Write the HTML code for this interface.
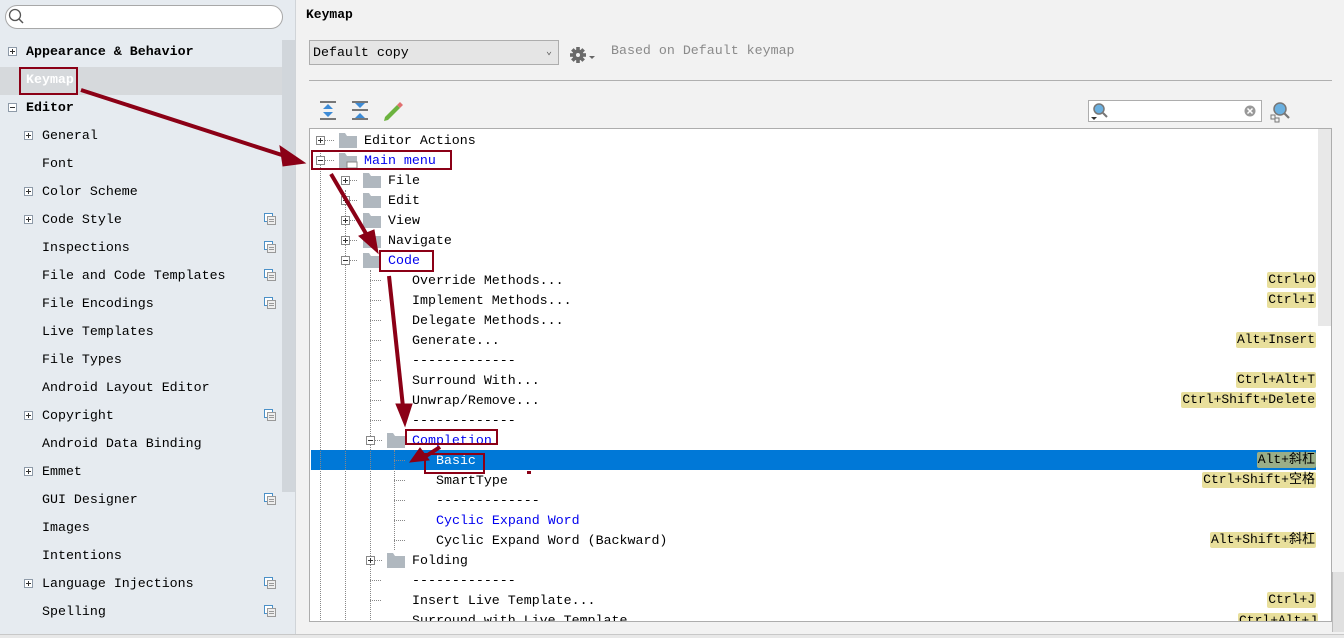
<!DOCTYPE html>
<html style="overflow:hidden"><head><meta charset="utf-8"><style>
*{margin:0;padding:0;box-sizing:border-box}
html,body{width:1344px;height:638px;overflow:hidden}
body{background:#f2f2f2;font-family:"Liberation Mono","Noto Sans CJK SC",monospace;font-size:13.3px;color:#000;position:relative}
.a{position:absolute;white-space:nowrap}
#side{position:absolute;left:0;top:0;width:296px;height:634px;background:#e6ebf0;border-right:1px solid #d0d4d8;overflow:hidden}
.si{position:absolute;height:28px;line-height:28px;white-space:nowrap}
.exp{position:absolute;width:9px;height:9px;border:1px solid #8e9aa8;background:#fff}
.exp::before{content:"";position:absolute;left:1px;top:3px;width:5px;height:1px;background:#333}
.exp.p::after{content:"";position:absolute;left:3px;top:1px;width:1px;height:5px;background:#333}
.r{position:absolute;height:20px;line-height:20px;white-space:nowrap}
.b{color:#0000ee}
.k{position:absolute;right:28px;height:16px;line-height:16px;background:#e8df9c;border-radius:2px;padding:0 1px;font-size:13px}
.dv{position:absolute;border-left:1px dotted #888;width:0}
.bx{position:absolute;border:2px solid #8b0016}
</style></head><body>
<div id="side">
 <div class="a" style="left:5px;top:5px;width:278px;height:24px;border:1px solid #a8a8a8;border-radius:12px;background:#fff"></div>
 <svg class="a" style="left:7px;top:8px" width="18" height="18"><circle cx="8" cy="7" r="5.5" fill="none" stroke="#555" stroke-width="1.3"/><line x1="12" y1="11" x2="16" y2="15" stroke="#555" stroke-width="1.5"/></svg>
 <div class="a" style="left:282px;top:40px;width:14px;height:452px;background:#d1d6db"></div>
 <div class="a" style="left:0;top:67px;width:282px;height:28px;background:#d6d9dc"></div>
 <div class="exp p" style="left:8px;top:47px"></div><div class="si" style="left:26px;top:38px;font-weight:bold">Appearance &amp; Behavior</div>
 <div class="si" style="left:26px;top:66px;font-weight:bold;color:#fff">Keymap</div>
 <div class="exp" style="left:8px;top:103px"></div><div class="si" style="left:26px;top:94px;font-weight:bold">Editor</div>
 <div class="exp p" style="left:24px;top:131px"></div><div class="si" style="left:42px;top:122px">General</div>
 <div class="si" style="left:42px;top:150px">Font</div>
 <div class="exp p" style="left:24px;top:187px"></div><div class="si" style="left:42px;top:178px">Color Scheme</div>
 <div class="exp p" style="left:24px;top:215px"></div><div class="si" style="left:42px;top:206px">Code Style</div>
 <div class="si" style="left:42px;top:234px">Inspections</div>
 <div class="si" style="left:42px;top:262px">File and Code Templates</div>
 <div class="si" style="left:42px;top:290px">File Encodings</div>
 <div class="si" style="left:42px;top:318px">Live Templates</div>
 <div class="si" style="left:42px;top:346px">File Types</div>
 <div class="si" style="left:42px;top:374px">Android Layout Editor</div>
 <div class="exp p" style="left:24px;top:411px"></div><div class="si" style="left:42px;top:402px">Copyright</div>
 <div class="si" style="left:42px;top:430px">Android Data Binding</div>
 <div class="exp p" style="left:24px;top:467px"></div><div class="si" style="left:42px;top:458px">Emmet</div>
 <div class="si" style="left:42px;top:486px">GUI Designer</div>
 <div class="si" style="left:42px;top:514px">Images</div>
 <div class="si" style="left:42px;top:542px">Intentions</div>
 <div class="exp p" style="left:24px;top:579px"></div><div class="si" style="left:42px;top:570px">Language Injections</div>
 <div class="si" style="left:42px;top:598px">Spelling</div>
</div>
<svg class="a" style="left:0;top:0" width="300" height="634">
 <defs><g id="cpy"><rect x="0.5" y="0.5" width="8" height="8" fill="#fff" stroke="#4a90c8"/><rect x="3.5" y="3.5" width="8" height="8" fill="#eee" stroke="#999"/><line x1="5" y1="6.5" x2="10" y2="6.5" stroke="#999"/><line x1="5" y1="8.5" x2="10" y2="8.5" stroke="#999"/></g></defs>
 <use href="#cpy" x="264" y="213"/><use href="#cpy" x="264" y="241"/><use href="#cpy" x="264" y="269"/><use href="#cpy" x="264" y="297"/><use href="#cpy" x="264" y="409"/><use href="#cpy" x="264" y="493"/><use href="#cpy" x="264" y="577"/><use href="#cpy" x="264" y="605"/>
</svg>
<div class="a" style="left:0;top:634px;width:1344px;height:4px;background:#e8e8e8;border-top:1px solid #c8c8c8"></div>

<div class="a" style="left:306px;top:7px;font-weight:bold;font-size:13px">Keymap</div>
<div class="a" style="left:309px;top:40px;width:250px;height:25px;border:1px solid #adadad;background:#e5e5e5;line-height:23px;padding-left:3px">Default copy<span style="position:absolute;right:6px;top:0;font-size:10px;color:#555">⌄</span></div>
<svg class="a" style="left:569px;top:45px" width="28" height="20"><g transform="translate(9,10)" fill="#6a6a6a"><circle r="5.5"/><g id="t"><rect x="-1.8" y="-8" width="3.6" height="16"/></g><use href="#t" transform="rotate(45)"/><use href="#t" transform="rotate(90)"/><use href="#t" transform="rotate(135)"/><circle r="2" fill="#f2f2f2"/></g><path d="M20 11 L26 11 L23 14Z" fill="#666"/></svg>
<div class="a" style="left:611px;top:43px;color:#8a8a8a">Based on Default keymap</div>
<div class="a" style="left:309px;top:80px;width:1023px;height:1px;background:#b0b0b0"></div>

<svg class="a" style="left:315px;top:98px" width="90" height="26">
 <line x1="5" y1="4" x2="21" y2="4" stroke="#777" stroke-width="2"/><line x1="5" y1="21" x2="21" y2="21" stroke="#777" stroke-width="2"/>
 <path d="M8 11 L13 6 L18 11Z M8 14 L13 19 L18 14Z" fill="#3d8bd6"/>
 <line x1="37" y1="4" x2="53" y2="4" stroke="#777" stroke-width="2"/><line x1="37" y1="12" x2="53" y2="12" stroke="#777" stroke-width="2"/><line x1="37" y1="21" x2="53" y2="21" stroke="#777" stroke-width="2"/>
 <path d="M40 5 L45 10 L50 5Z M40 20 L45 15 L50 20Z" fill="#3d8bd6"/>
 <path d="M70 19 L82 7 L85 10 L73 22 L69 23Z" fill="#6cb33f"/><path d="M82 7 L85 4 L88 7 L85 10Z" fill="#e07070"/>
</svg>

<div class="a" style="left:1088px;top:100px;width:174px;height:22px;border:1px solid #adadad;background:#fff"></div>
<svg class="a" style="left:1090px;top:101px" width="200" height="22"><circle cx="9" cy="8" r="5" fill="#6ab0e0" stroke="#777" stroke-width="1.5"/><line x1="13" y1="12" x2="17" y2="16" stroke="#777" stroke-width="2"/><path d="M1 16 L7 16 L4 19Z" fill="#333"/>
<circle cx="160" cy="10" r="5.5" fill="#999"/><path d="M157.5 7.5 L162.5 12.5 M162.5 7.5 L157.5 12.5" stroke="#fff" stroke-width="1.5"/>
<circle cx="190" cy="8" r="6" fill="#6ab0e0" stroke="#777" stroke-width="1.5"/><line x1="194" y1="12" x2="199" y2="17" stroke="#777" stroke-width="2.2"/><rect x="181" y="14" width="4" height="4" fill="none" stroke="#777"/><rect x="185" y="17" width="4" height="4" fill="none" stroke="#777"/></svg>

<div class="a" style="left:309px;top:128px;width:1023px;height:494px;background:#fff;border:1px solid #adadad;overflow:hidden">
 <div class="a" style="left:1008px;top:0;width:13px;height:197px;background:#e8e8e8"></div>
</div>
<div class="a" style="left:1332px;top:572px;width:12px;height:60px;background:#e0e0e0;border-left:1px solid #bbb"></div>
<div class="a" style="left:310px;top:129px;width:1021px;height:492px;overflow:hidden">
 <div class="a" style="left:1px;top:321px;width:1005px;height:20px;background:#0078d7"></div>
 <div class="dv" style="left:10px;top:21px;height:480px"></div>
 <div class="dv" style="left:35px;top:61px;height:440px"></div>
 <div class="dv" style="left:60px;top:141px;height:440px"></div>
 <div class="dv" style="left:84px;top:321px;height:100px"></div>
</div>
<svg class="a" style="left:310px;top:129px" width="1021" height="492">
 <defs><g id="f"><path d="M0 3 L0 15 L18 15 L18 3 L8 3 L6 0 L0 0Z" fill="#b0b8bf"/></g>
 <g id="pl"><rect x="0.5" y="0.5" width="8" height="8" fill="#fff" stroke="#888"/><line x1="2" y1="4.5" x2="7" y2="4.5" stroke="#333"/><line x1="4.5" y1="2" x2="4.5" y2="7" stroke="#333"/></g>
 <g id="mn"><rect x="0.5" y="0.5" width="8" height="8" fill="#fff" stroke="#888"/><line x1="2" y1="4.5" x2="7" y2="4.5" stroke="#333"/></g></defs>
 <g stroke="#888" stroke-dasharray="1,1">
 <line x1="15" y1="11.5" x2="24" y2="11.5"/><line x1="15" y1="31.5" x2="24" y2="31.5"/>
 <line x1="40" y1="51.5" x2="48" y2="51.5"/><line x1="40" y1="71.5" x2="48" y2="71.5"/><line x1="40" y1="91.5" x2="48" y2="91.5"/><line x1="40" y1="111.5" x2="48" y2="111.5"/><line x1="40" y1="131.5" x2="48" y2="131.5"/>
 <line x1="60" y1="151.5" x2="72" y2="151.5"/><line x1="60" y1="171.5" x2="72" y2="171.5"/><line x1="60" y1="191.5" x2="72" y2="191.5"/><line x1="60" y1="211.5" x2="72" y2="211.5"/><line x1="60" y1="231.5" x2="72" y2="231.5"/><line x1="60" y1="251.5" x2="72" y2="251.5"/><line x1="60" y1="271.5" x2="72" y2="271.5"/><line x1="60" y1="291.5" x2="72" y2="291.5"/><line x1="65" y1="311.5" x2="72" y2="311.5"/>
 <line x1="84" y1="331.5" x2="96" y2="331.5"/><line x1="84" y1="351.5" x2="96" y2="351.5"/><line x1="84" y1="371.5" x2="96" y2="371.5"/><line x1="84" y1="391.5" x2="96" y2="391.5"/><line x1="84" y1="411.5" x2="96" y2="411.5"/>
 <line x1="65" y1="431.5" x2="72" y2="431.5"/><line x1="60" y1="451.5" x2="72" y2="451.5"/><line x1="60" y1="471.5" x2="72" y2="471.5"/>
 </g>
 <use href="#pl" x="6" y="7"/><use href="#mn" x="6" y="27"/>
 <use href="#pl" x="31" y="47"/><use href="#pl" x="31" y="67"/><use href="#pl" x="31" y="87"/><use href="#pl" x="31" y="107"/><use href="#mn" x="31" y="127"/>
 <use href="#mn" x="56" y="307"/><use href="#pl" x="56" y="427"/>
 <use href="#f" x="29" y="4"/><use href="#f" x="29" y="24"/><rect x="37" y="33" width="10" height="6" fill="#fff" stroke="#888"/>
 <use href="#f" x="53" y="44"/><use href="#f" x="53" y="64"/><use href="#f" x="53" y="84"/><use href="#f" x="53" y="104"/><use href="#f" x="53" y="124"/>
 <use href="#f" x="77" y="304"/><use href="#f" x="77" y="424"/>
</svg>
<div class="r" style="left:364px;top:131px">Editor Actions</div>
<div class="r b" style="left:364px;top:151px">Main menu</div>
<div class="r" style="left:388px;top:171px">File</div>
<div class="r" style="left:388px;top:191px">Edit</div>
<div class="r" style="left:388px;top:211px">View</div>
<div class="r" style="left:388px;top:231px">Navigate</div>
<div class="r b" style="left:388px;top:251px">Code</div>
<div class="r" style="left:412px;top:271px">Override Methods...</div>
<div class="r" style="left:412px;top:291px">Implement Methods...</div>
<div class="r" style="left:412px;top:311px">Delegate Methods...</div>
<div class="r" style="left:412px;top:331px">Generate...</div>
<div class="r" style="left:412px;top:351px">-------------</div>
<div class="r" style="left:412px;top:371px">Surround With...</div>
<div class="r" style="left:412px;top:391px">Unwrap/Remove...</div>
<div class="r" style="left:412px;top:411px">-------------</div>
<div class="r b" style="left:412px;top:431px">Completion</div>
<div class="r" style="left:436px;top:451px;color:#fff">Basic</div>
<div class="r" style="left:436px;top:471px">SmartType</div>
<div class="r" style="left:436px;top:491px">-------------</div>
<div class="r b" style="left:436px;top:511px">Cyclic Expand Word</div>
<div class="r" style="left:436px;top:531px">Cyclic Expand Word (Backward)</div>
<div class="r" style="left:412px;top:551px">Folding</div>
<div class="r" style="left:412px;top:571px">-------------</div>
<div class="r" style="left:412px;top:591px">Insert Live Template...</div>
<div class="a" style="left:310px;top:611px;width:1008px;height:10px;overflow:hidden"><div class="r" style="left:102px;top:0">Surround with Live Template</div><div class="k" style="right:0;top:2px">Ctrl+Alt+J</div></div>
<div class="k" style="top:272px">Ctrl+O</div>
<div class="k" style="top:292px">Ctrl+I</div>
<div class="k" style="top:332px">Alt+Insert</div>
<div class="k" style="top:372px">Ctrl+Alt+T</div>
<div class="k" style="top:392px">Ctrl+Shift+Delete</div>
<div class="k" style="top:452px;background:#9aae88">Alt+斜杠</div>
<div class="k" style="top:472px">Ctrl+Shift+空格</div>
<div class="k" style="top:532px">Alt+Shift+斜杠</div>
<div class="k" style="top:592px">Ctrl+J</div>

<div class="bx" style="left:19px;top:67px;width:59px;height:28px"></div>
<div class="bx" style="left:311px;top:150px;width:141px;height:20px"></div>
<div class="bx" style="left:379px;top:250px;width:55px;height:22px"></div>
<div class="bx" style="left:405px;top:429px;width:93px;height:16px"></div>
<div class="bx" style="left:424px;top:453px;width:61px;height:21px"></div>
<div class="a" style="left:527px;top:471px;width:4px;height:3px;background:#8b0016"></div>
<svg class="a" style="left:0;top:0" width="600" height="634">
 <g stroke="#8b0016" stroke-width="4" fill="#8b0016">
  <line x1="81" y1="90" x2="285" y2="156"/><path d="M305 163 L280 146 L283 166Z" stroke-width="1"/>
  <line x1="331" y1="174" x2="368" y2="237"/><path d="M378 253 L359 236 L374 230Z" stroke-width="1"/>
  <line x1="389" y1="276" x2="403" y2="407"/><path d="M405 426 L396 404 L412 404Z" stroke-width="1"/>
  <line x1="440" y1="447" x2="423" y2="458"/><path d="M410 462 L420 448 L429 460Z" stroke-width="1"/>
 </g>
</svg>
</body></html>
